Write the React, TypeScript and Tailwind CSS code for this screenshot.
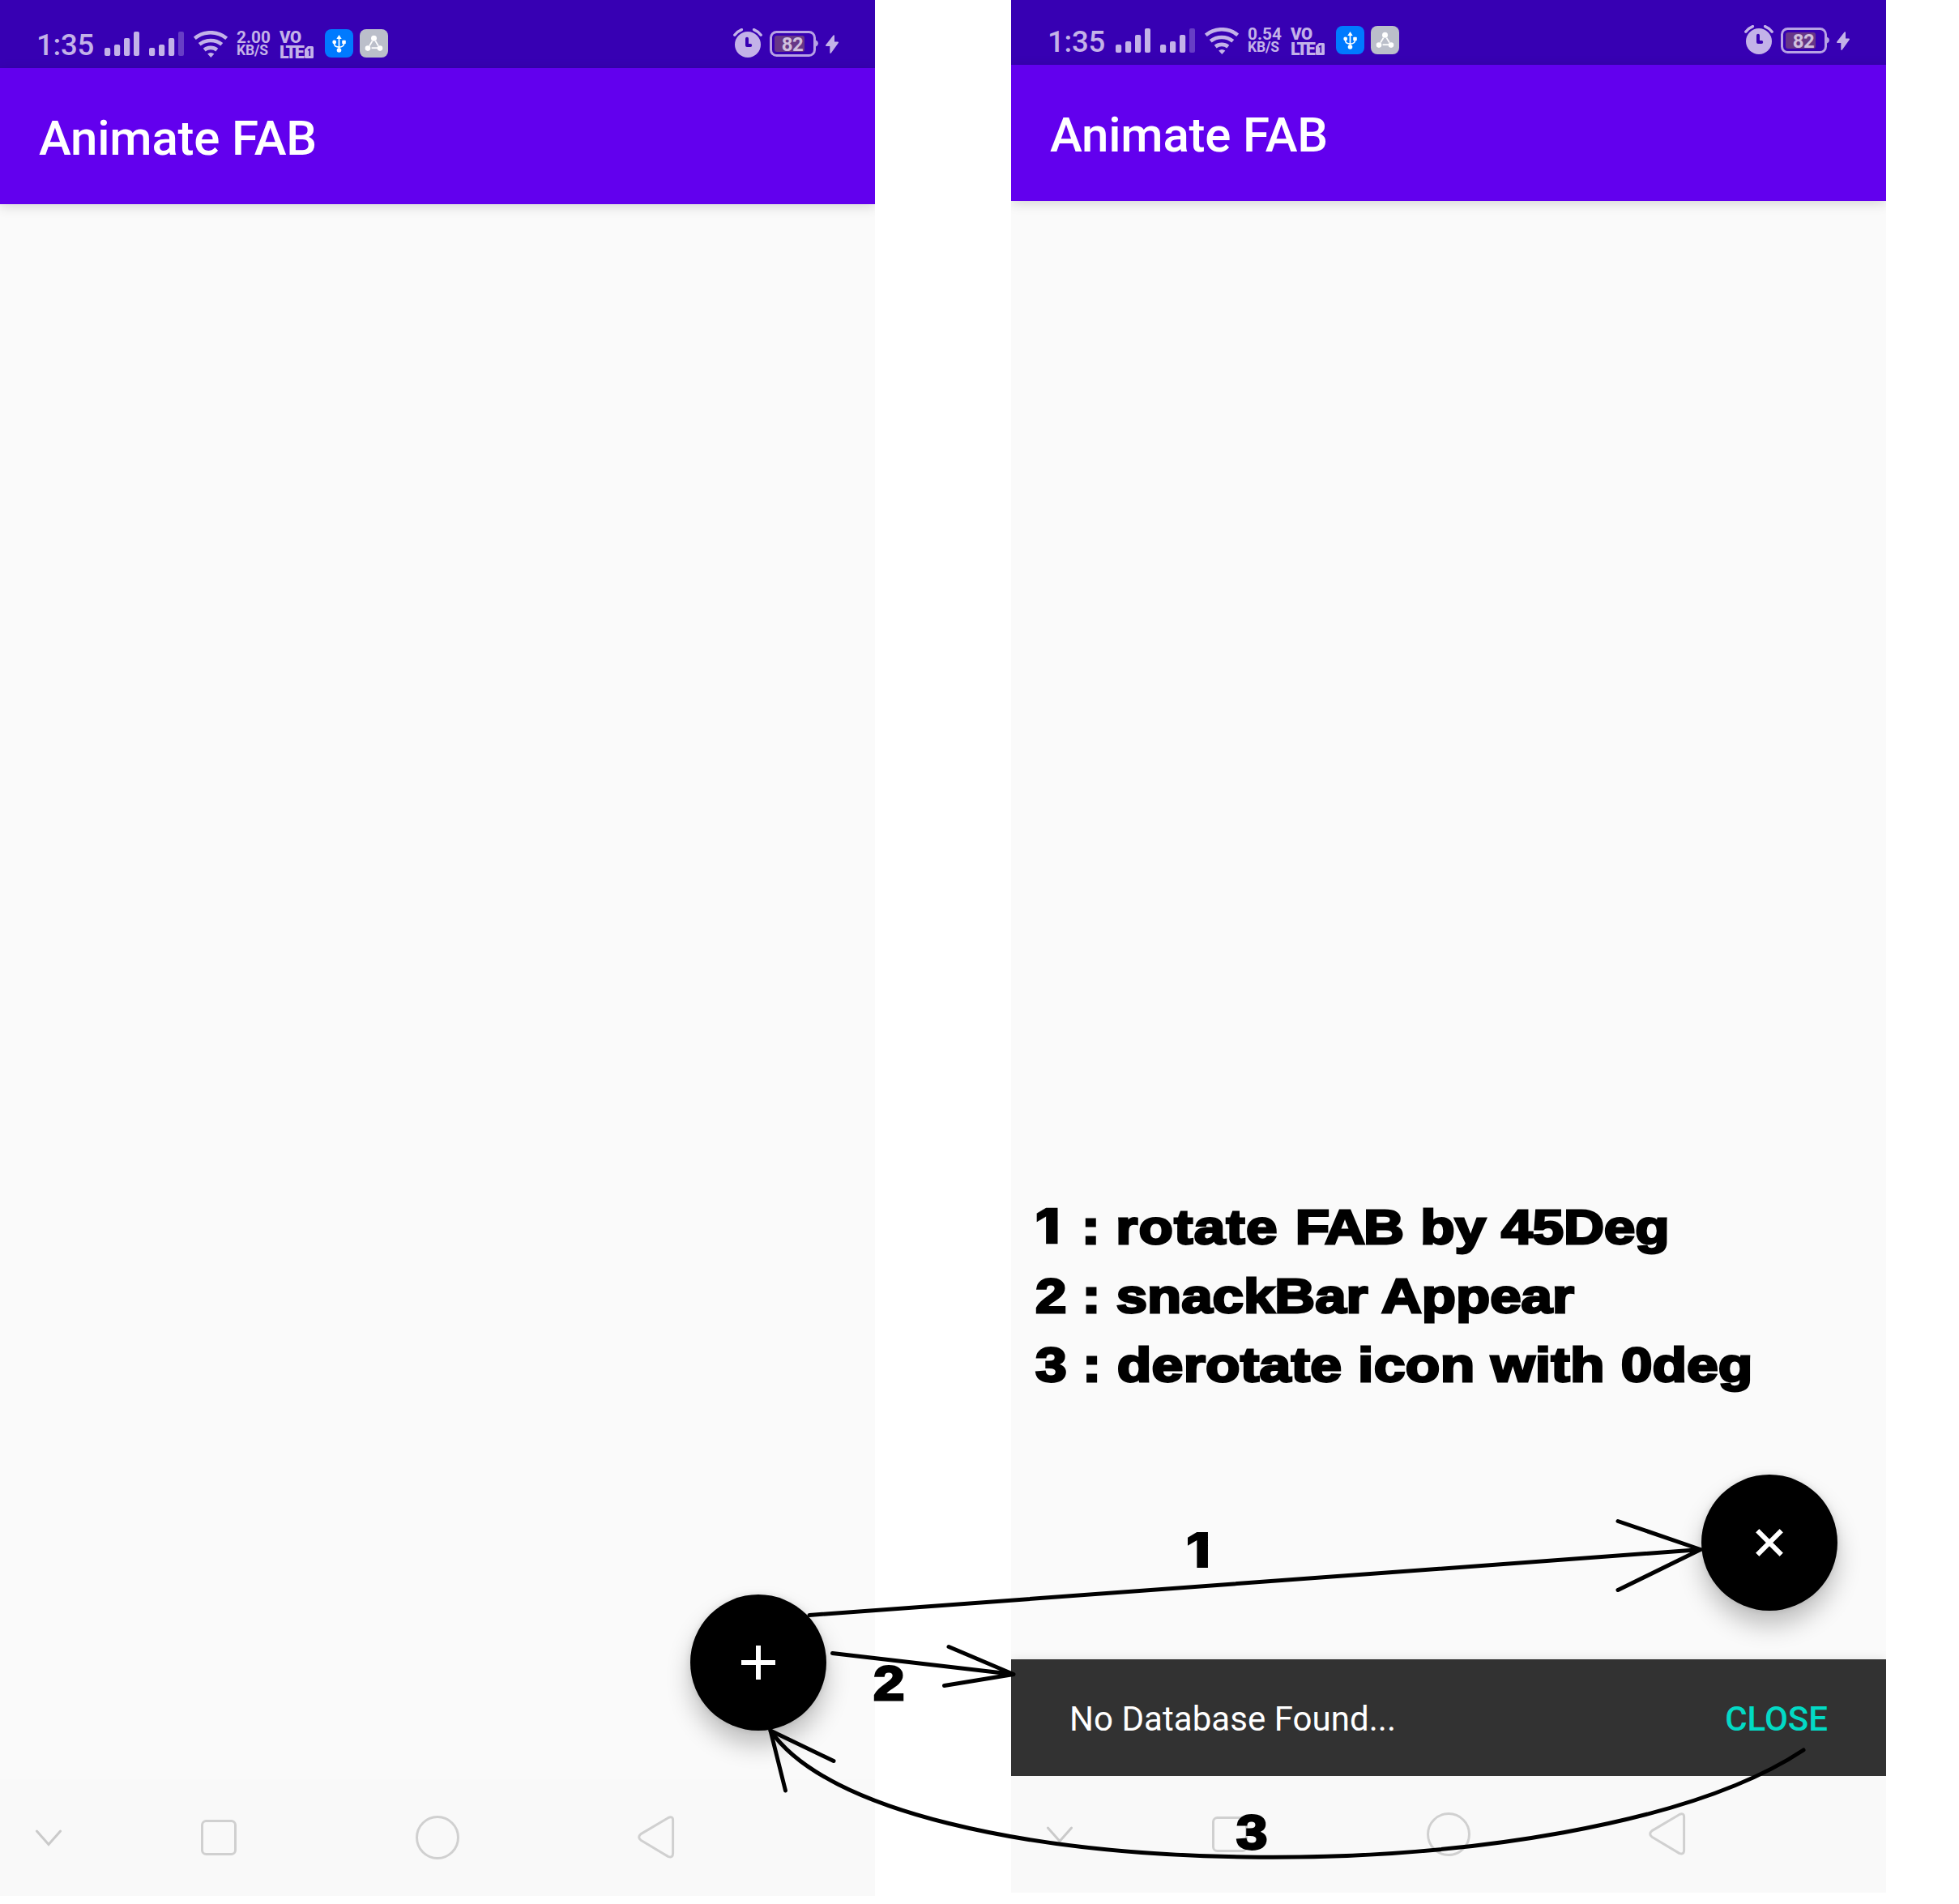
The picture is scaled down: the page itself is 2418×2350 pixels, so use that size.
const INK = "#c3b2e8";

function Signal({ weak }: { weak?: boolean }) {
  return (
    <svg width="43" height="30" viewBox="0 0 43 30" fill={INK}>
      <rect x="0" y="20" width="7.2" height="10" rx="2" />
      <rect x="12" y="16" width="7.2" height="14" rx="2" />
      <rect x="24" y="8" width="7.2" height="22" rx="2" />
      <rect x="36" y="0" width="7" height="30" rx="2" opacity={weak ? 0.35 : 1} />
    </svg>
  );
}

function Wifi() {
  return (
    <svg width="42" height="33" viewBox="0 0 42 33" fill="none" stroke={INK} strokeWidth="4.6">
      <path d="M1.3 9.3 A31 31 0 0 1 40.7 9.3" />
      <path d="M7.2 16.8 A22 22 0 0 1 34.8 16.8" />
      <path d="M13.2 23.6 A12.5 12.5 0 0 1 28.8 23.6" />
      <path d="M17.2 28.6 Q21 25.4 25.4 28.6 L21.3 33 Z" fill={INK} stroke="none" />
    </svg>
  );
}

function UsbIcon() {
  return (
    <svg width="35" height="35" viewBox="0 0 35 35">
      <rect width="35" height="35" rx="8" fill="#007aff" />
      <g fill="none" stroke="#fff" strokeWidth="1.7">
        <path d="M17.5 10V26" />
        <path d="M11.7 16V18.5Q12 21.8 17.5 22.2Q23 21.8 23.4 18.5V16" />
      </g>
      <path d="M17.5 7L20.7 12H14.3Z" fill="#fff" />
      <circle cx="11.7" cy="16" r="2.4" fill="#fff" />
      <rect x="21.2" y="13.8" width="4.6" height="4.4" rx="1" fill="#fff" />
      <circle cx="17.5" cy="26" r="2.8" fill="#fff" />
    </svg>
  );
}

function NodesIcon() {
  return (
    <svg width="35" height="35" viewBox="0 0 35 35">
      <rect width="35" height="35" rx="8" fill="#bbbfca" />
      <g stroke="#fff" strokeWidth="1.8">
        <path d="M15.6 14.6L12 20.6" />
        <path d="M19.4 14.6L23 20.6" />
        <path d="M14.6 23.2H22.4" />
      </g>
      <g fill="#fff">
        <circle cx="17.5" cy="11.3" r="3.5" />
        <circle cx="10" cy="23.6" r="3.3" />
        <circle cx="25" cy="23.6" r="3.3" />
      </g>
    </svg>
  );
}

function Alarm() {
  return (
    <svg width="36" height="36" viewBox="0 0 36 36">
      <circle cx="18" cy="20" r="16" fill={INK} />
      <path d="M1.8 8.2Q5 3.8 10.4 1.6M34.2 8.2Q31 3.8 25.6 1.6" stroke={INK} strokeWidth="3.4" strokeLinecap="round" fill="none" />
      <path d="M17 12.8V21H21.2" stroke="#3700b3" strokeWidth="4" strokeLinecap="round" strokeLinejoin="round" fill="none" />
    </svg>
  );
}

function Battery() {
  return (
    <svg width="60" height="32" viewBox="0 0 60 32">
      <rect x="1.5" y="1.5" width="54" height="29" rx="7" fill="none" stroke="#b7a2e4" strokeWidth="3" />
      <path d="M57 11.5Q60 13 60 15.5T57 19.5Z" fill="#b7a2e4" />
      <rect x="6" y="6" width="37" height="20" rx="3" fill="#673787" />
      <text x="28.2" y="25" textAnchor="middle" fontFamily="Roboto, sans-serif" fontWeight="700" fontSize="24" fill="#d0c0dd" textLength="27">
        82
      </text>
    </svg>
  );
}

function Bolt() {
  return (
    <svg width="16" height="23" viewBox="0 0 16 23" fill={INK}>
      <path d="M9.6 .4Q11 -.2 11 1.2V8.6H15Q16.6 8.8 15.6 10.2L7 22.3Q5.4 23.6 5.3 22V14H1Q-.6 13.6 .4 12.2Z" />
    </svg>
  );
}

function StatusBar({ speed }: { speed: string }) {
  return (
    <div className="flex h-[84px] items-start bg-[#3700b3] pl-[45px] text-[#c3b2e8]">
      <div className="mt-[34px] w-[84px] text-[36.5px] leading-[43px] font-medium tracking-[-0.2px]">1:35</div>
      <div className="mt-[39px] w-[55px]"><Signal /></div>
      <div className="mt-[39px] w-[55px]"><Signal weak /></div>
      <div className="mt-[38px] w-[53px]"><Wifi /></div>
      <div className="mt-[36px] w-[53px] font-bold">
        <div className="h-5 text-[20.8px] leading-[20px]">{speed}</div>
        <div className="h-[13px] text-[17.5px] leading-[13px] tracking-[-0.2px]">KB/S</div>
      </div>
      <div className="mt-[36px] w-[56px] font-black">
        <div className="h-5 text-[20.5px] leading-[20px] tracking-[-0.4px]">VO</div>
        <div className="flex items-center">
          <div className="w-[31px] text-[21.5px] leading-[17px] tracking-[-2.1px]">LTE</div>
          <svg width="11" height="15" viewBox="0 0 11 15">
            <path d="M4 0H9.5Q11 0 11 1.5V13.5Q11 15 9.5 15H1.5Q0 15 0 13.5V4Z" fill={INK} />
            <path d="M4 5L6.3 3.8V12" stroke="#3700b3" strokeWidth="1.7" fill="none" />
          </svg>
        </div>
      </div>
      <div className="mt-[36px] flex gap-2"><UsbIcon /><NodesIcon /></div>
      <div className="mt-[35px] ml-auto w-[45px]"><Alarm /></div>
      <div className="mt-[38px] w-[69px]"><Battery /></div>
      <div className="mt-[43px] mr-[45px]"><Bolt /></div>
    </div>
  );
}

function AppBar() {
  return (
    <div className="flex h-[168px] items-center bg-[#6200ee] pt-[5px] pl-12 shadow-[0_3px_14px_rgba(0,0,0,0.15)]">
      <h1 className="text-[60px] leading-[70px] font-medium tracking-[-0.2px] text-white">Animate FAB</h1>
    </div>
  );
}

function NavBar() {
  return (
    <div className="grid h-36 grid-cols-[120px_300px_240px_300px_120px] place-items-center bg-[#f9f9f9]">
      <svg width="34" height="22" viewBox="0 0 34 22" fill="none" stroke="#cacaca" strokeWidth="3" strokeLinecap="round">
        <path d="M2.4 3L17 19.5L31.6 3" />
      </svg>
      <svg width="44" height="44" viewBox="0 0 44 44" fill="none" stroke="#d0d0d0" strokeWidth="3">
        <rect x="1.5" y="1.5" width="41" height="41" rx="5" />
      </svg>
      <svg width="54" height="54" viewBox="0 0 54 54" fill="none" stroke="#d0d0d0" strokeWidth="3">
        <circle cx="27" cy="27" r="25.5" />
      </svg>
      <svg width="46" height="54" viewBox="0 0 46 54" fill="none" stroke="#d0d0d0" strokeWidth="3" strokeLinejoin="round">
        <path d="M37.6 2.7Q43.6 -.2 43.6 5.8V46.6Q43.6 52.6 37.6 50.4L4 30.2Q-.6 26.4 4 22.6Z" />
      </svg>
    </div>
  );
}

function Fab({ rotated }: { rotated?: boolean }) {
  return (
    <div className="mr-[60px] flex size-[168px] items-center justify-center rounded-full bg-black shadow-[0_18px_30px_rgba(0,0,0,0.24),0_0_9px_rgba(0,0,0,0.1)]">
      <svg width="42" height="42" viewBox="0 0 42 42" stroke="#fff" strokeWidth="6" className={rotated ? "rotate-45" : ""}>
        <path d="M21 0V42M0 21H42" />
      </svg>
    </div>
  );
}

function Snackbar() {
  return (
    <div className="flex h-36 items-center justify-between bg-[#323232] pt-[4px] pr-[72px] pl-[72px] text-[42px] leading-[50px] shadow-[0_0_12px_rgba(0,0,0,0.1)]">
      <span className="tracking-[0.05px] text-white">No Database Found...</span>
      <span className="font-medium text-[#03dac5]">CLOSE</span>
    </div>
  );
}

function Arrows() {
  return (
    <svg
      className="absolute top-0 left-0"
      width="2418"
      height="2350"
      viewBox="0 0 2418 2350"
      fill="none"
      stroke="#000"
      strokeWidth="5"
      strokeLinecap="round"
      strokeLinejoin="round"
    >
      <path d="M999 1993.5L2099 1912.5M1997 1877.5L2099 1912.5L1997 1962.5" />
      <path d="M1027.5 2040.5L1251 2066.5M1171 2032.5L1251 2066.5L1165.5 2080.5" />
      <path d="M951 2136C1090 2337 1950 2343 2226 2160" />
      <path d="M1029 2173.5L951 2136L969.5 2210" />
    </svg>
  );
}

const HEAVY =
  "absolute origin-left whitespace-pre font-['Liberation_Sans',sans-serif] text-[60px] leading-[85px] font-bold text-black [-webkit-text-stroke:2.8px_#000]";

export default function App() {
  return (
    <div className="relative flex h-[2350px] w-[2418px] items-start overflow-hidden bg-white font-[Roboto,sans-serif]">
      <section className="flex h-[2340px] w-[1080px] flex-col overflow-hidden bg-[#fafafa]">
        <StatusBar speed="2.00" />
        <AppBar />
        <div className="flex flex-1 items-end justify-end pb-[60px]"><Fab /></div>
        <NavBar />
      </section>
      <section className="-mt-1 ml-[168px] flex h-[2340px] w-[1080px] flex-col overflow-hidden bg-[#fafafa]">
        <StatusBar speed="0.54" />
        <AppBar />
        <div className="flex flex-1 items-end justify-end pb-[60px]"><Fab rotated /></div>
        <Snackbar />
        <NavBar />
      </section>

      <Arrows />
      <div className={`${HEAVY} top-[1472px] left-[1277px] scale-x-[1.155]`}>
        <span className="inline-block w-[33.4px] font-[Inter,sans-serif] leading-none font-black [-webkit-text-stroke:0.6px_#000]">1</span>
        {" : "}
        <span className="tracking-[1.2px]">rotate </span>
        <span className="tracking-[-1.8px]">FA</span>
        <span className="tracking-[0.4px]">B </span>
        <span className="tracking-[-0.1px]">by 45Deg</span>
      </div>
      <div className={`${HEAVY} top-[1557px] left-[1278px] scale-x-[1.15]`}>2 : snackBar Appear</div>
      <div className={`${HEAVY} top-[1642px] left-[1278px] scale-x-[1.161]`}>
        3 : <span className="tracking-[0.3px]">derotate icon with </span>0deg
      </div>
      <div className="absolute top-[1871px] left-[1463px] origin-left scale-x-[1.15] font-[Inter,sans-serif] text-[60px] leading-[85px] font-black text-black">1</div>
      <div className={`${HEAVY} top-[2035px] left-[1078px] scale-x-[1.15]`}>2</div>
      <div className={`${HEAVY} top-[2219px] left-[1526px] scale-x-[1.15]`}>3</div>
    </div>
  );
}
